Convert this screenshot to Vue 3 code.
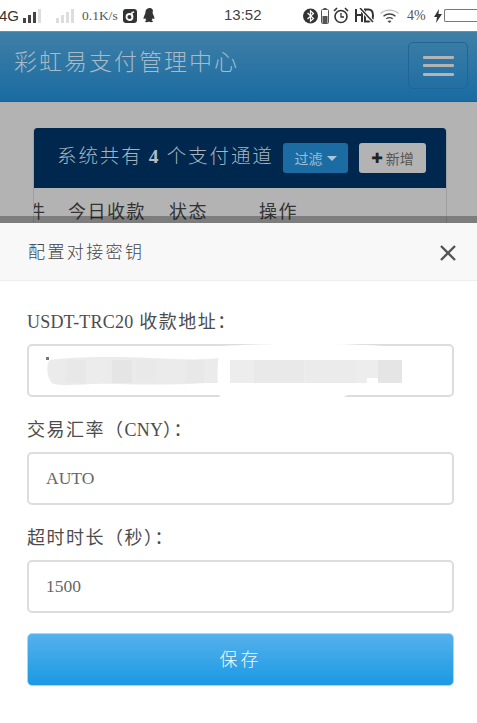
<script setup>
const tableCols = [
  { text: '件', cls: 'c0' },
  { text: '今日收款', cls: 'c1' },
  { text: '状态', cls: 'c2' },
  { text: '操作', cls: 'c3' },
]
const fields = [
  { pre: '', lat: 'USDT-TRC20', post: ' 收款地址：', value: '', redacted: true },
  { pre: '交易汇率（', lat: 'CNY', post: '）：', value: 'AUTO' },
  { pre: '超时时长（秒）：', lat: '', post: '', value: '1500' },
]
const blocks = [
  [66, '#e8e8e8'], [86, '#ececec'], [112, '#e5e5e5'], [136, '#e9e9e9'], [160, '#ebebeb'],
  [186, '#e8e8e8'], [204, '#ebebeb'],
]
</script>

<template>
  <div class="screen">
    <div class="status">
      <div class="st-left">
        <span class="net">4G</span>
        <svg class="sig" width="20" height="14" viewBox="0 0 20 14"><rect x="0" y="9" width="3" height="5" fill="#444"/><rect x="5" y="6" width="3" height="8" fill="#444"/><rect x="10" y="3" width="3" height="11" fill="#444"/><rect x="15" y="0" width="3" height="14" fill="#ddd"/></svg>
        <svg class="sig2" width="20" height="14" viewBox="0 0 20 14"><rect x="0" y="9" width="3" height="5" fill="#ddd"/><rect x="5" y="6" width="3" height="8" fill="#ddd"/><rect x="10" y="3" width="3" height="11" fill="#ddd"/><rect x="15" y="0" width="3" height="14" fill="#ddd"/></svg>
        <span class="speed">0.1K/s</span>
        <svg class="ic-music" width="14" height="14" viewBox="0 0 14 14"><rect width="14" height="14" rx="3" fill="#333"/><circle cx="6.500" cy="8" r="3" fill="none" stroke="#fff" stroke-width="1.800"/><path d="M9 8V3.500l2.200-.6" fill="none" stroke="#fff" stroke-width="1.400"/></svg>
        <svg class="ic-qq" width="13" height="15" viewBox="0 0 13 15"><path d="M6.500 0C3.600 0 2.400 2.200 2.400 4.600c0 1-.4 1.600-1 2.900C.6 9.200.3 10.600.8 11c.4.200.9-.4 1.300-1 .2 1 .8 1.800 1.400 2.300-1 .4-1.600.9-1.300 1.500.3.700 2.300.5 3.800 0h0c1.500.5 3.500.7 3.800 0 .3-.6-.3-1.100-1.300-1.500.6-.5 1.200-1.300 1.400-2.300.4.600.9 1.200 1.300 1 .5-.4.200-1.800-.6-3.500-.6-1.300-1-1.900-1-2.900C10.600 2.200 9.400 0 6.500 0z" fill="#333"/></svg>
      </div>
      <span class="clock">13:52</span>
      <div class="st-right">
        <svg class="ic-bt" width="15" height="16" viewBox="0 0 15 16"><circle cx="7.500" cy="8" r="7.500" fill="#333"/><path d="M4.500 5l6 5.500-3 2.700V2.800l3 2.700-6 5.500" fill="none" stroke="#fff" stroke-width="1.200"/></svg>
        <svg class="ic-batt" width="8" height="16" viewBox="0 0 8 16"><rect x="2.500" y="0" width="3" height="2" fill="#555"/><rect x=".5" y="1.500" width="7" height="14" rx="1" fill="#fff" stroke="#555"/><rect x="1.500" y="8" width="5" height="7" fill="#555"/></svg>
        <svg class="ic-alarm" width="16" height="17" viewBox="0 0 16 17"><circle cx="8" cy="9.500" r="6" fill="none" stroke="#333" stroke-width="1.600"/><path d="M8 6v4h3" fill="none" stroke="#333" stroke-width="1.300"/><path d="M1 4l3-3M15 4l-3-3" stroke="#333" stroke-width="1.600"/></svg>
        <svg class="ic-hd" width="19" height="15" viewBox="0 0 19 15"><path d="M1 1v13M7 1v13M1 7h6" stroke="#333" stroke-width="2" fill="none"/><path d="M10 1.500h3.500c3.500 0 4.500 3 4.500 6s-1 6-4.500 6H10z" stroke="#333" stroke-width="2" fill="none"/><path d="M5 0l13 14" stroke="#fff" stroke-width="3.500"/><path d="M5 0l13 14" stroke="#333" stroke-width="1.500"/></svg>
        <svg class="ic-wifi" width="19" height="14" viewBox="0 0 19 14"><path d="M.5 4.500c5-4.500 13-4.500 18 0" fill="none" stroke="#bbb" stroke-width="1.100"/><path d="M3.500 7.200c3.500-3 8.500-3 12 0" fill="none" stroke="#444" stroke-width="1.400"/><path d="M6.300 9.800c2-1.500 4.400-1.500 6.400 0" fill="none" stroke="#444" stroke-width="1.400"/><path d="M9.500 14l-2-2c1.200-.8 2.800-.8 4 0z" fill="#444"/></svg>
        <span class="pct">4%</span>
        <svg class="ic-bolt" width="8" height="14" viewBox="0 0 8 14"><path d="M5 0L0 8h3l-1 6 6-9H4.500z" fill="#333"/></svg>
        <span class="batt"></span>
      </div>
    </div>

    <header class="nav">
      <span class="brand">彩虹易支付管理中心</span>
      <div class="toggler"><i></i><i></i><i></i></div>
    </header>

    <main class="content">
      <section class="panel">
        <div class="panel-head">
          <span class="panel-title">系统共有 <b>4</b> 个支付通道</span>
          <span class="btn-filter">过滤<i class="caret"></i></span>
          <span class="btn-add"><b class="plus">✚</b>新增</span>
        </div>
        <div class="table-row">
          <span v-for="c in tableCols" :key="c.text" :class="c.cls">{{ c.text }}</span>
        </div>
      </section>
    </main>

    <div class="modal">
      <div class="modal-head">
        <span class="modal-title">配置对接密钥</span>
        <svg class="close" width="18" height="18" viewBox="0 0 18 18"><path d="M2 2l14 14M16 2L2 16" stroke="#555" stroke-width="2.400"/></svg>
      </div>
      <form class="modal-body">
        <div v-for="f in fields" :key="f.pre + f.lat" class="field">
          <label class="lbl">{{ f.pre }}<span class="lat">{{ f.lat }}</span>{{ f.post }}</label>
          <div class="input">
            <span>{{ f.value }}</span>
          </div>
        </div>
        <div class="save">保存</div>
      </form>
      <svg class="smear" width="477" height="70" viewBox="0 0 477 70">
        <rect x="46" y="21" width="3" height="3" fill="#777"/>
        <path d="M50 24c20-3 60-4 100-2 40 2 60 2 76-1v24c-30 4-70 4-110 3-30-1-50 3-62 0-8-3-8-22-4-24z" fill="#ebebeb"/>
        <rect v-for="b in blocks" :key="b[0]" :x="b[0]" y="24" width="20" height="23" :fill="b[1]" />
        <path d="M222 10c40-3 120-3 163 0 7 3 9 8 9 14 12-6 24-10 34-8-8 3-20 8-34 12v19h-29c-10 8-18 14-26 15-30 6-80 6-117 4-6-10-6-46 0-56z" fill="#fff"/>
        <rect x="230" y="24" width="172" height="18" fill="#ededed"/>
        <rect x="230" y="42" width="137" height="5" fill="#ededed"/>
        <rect x="378" y="42" width="24" height="5" fill="#e3e3e3"/>
        <rect x="254" y="24" width="50" height="23" fill="#e9e9e9"/>
        <rect x="306" y="24" width="50" height="23" fill="#ebebeb"/>
        <rect x="378" y="24" width="24" height="23" fill="#e5e5e5"/>
      </svg>
    </div>
  </div>
</template>

<style scoped>
.screen {
  position: relative;
  width: 477px;
  height: 723px;
  overflow: hidden;
  background: #b3b3b3;
  font-family: "Liberation Serif", "Noto Sans CJK SC", serif;
  display: flex;
  flex-direction: column;
}
.status {
  height: 31px;
  background: #fff;
  display: flex;
  align-items: center;
  justify-content: space-between;
  color: #444;
  flex: none;
  position: relative;
}
.st-left, .st-right { display: flex; align-items: center; }
.net { font: 15px "Liberation Sans", sans-serif; color: #333; width: 24px; margin-left: -1px; }
.sig { margin-right: 13px; }
.sig2 { margin-right: 6px; }
.speed { font-size: 13.500px; width: 41px; color: #555; }
.ic-qq { margin-left: 6px; }
.clock { font: 15px "Liberation Sans", sans-serif; color: #444; position: absolute; left: 224px; top: 6px; }
.st-right > * { margin-left: 3px; }
.ic-alarm { margin-left: 4px; }
.ic-hd { margin-left: 6px; }
.ic-wifi { margin-left: 6px; }
.pct { font-size: 14px; margin-left: 8px; width: 24px; color: #555; white-space: nowrap; }
.ic-bolt { margin-left: 3px; }
.batt { width: 33px; height: 13px; margin-left: 2px; border: 1px solid #777; border-right: none; border-radius: 2px 0 0 2px; box-sizing: border-box; }
.nav {
  height: 71px;
  flex: none;
  box-sizing: border-box;
  border-top: 1px solid #5c92b2;
  border-bottom: 1px solid #17608f;
  background: linear-gradient(#3f7fa6, #1a6ba2);
  display: flex;
  align-items: center;
  justify-content: space-between;
  padding: 0 9px 7px 14px;
}
.brand { font-size: 23px; letter-spacing: 2px; color: #a9bac8; font-family: "Noto Sans CJK SC", sans-serif; font-weight: 300; margin-bottom: 6px; }
.toggler {
  width: 60px;
  height: 47px;
  margin-top: 5px;
  box-sizing: border-box;
  border: 1px solid #1f6596;
  border-radius: 5px;
  display: flex;
  flex-direction: column;
  align-items: center;
  justify-content: center;
  gap: 5.500px;
}
.toggler i { display: block; width: 31px; height: 3px; border-radius: 1px; background: #b3b3b3; }
.content { padding: 26px 30px 0 33px; }
.panel {
  width: 414px;
  height: 200px;
  box-sizing: border-box;
  border: 1px solid #a0a0a0;
  border-top: none;
  border-radius: 4px 4px 0 0;
  overflow: hidden;
}
.panel-head {
  height: 60px;
  margin: 0 -1px;
  background: #00284f;
  display: flex;
  align-items: center;
  padding-left: 24px;
  color: #a7b3bf;
  border-radius: 4px 4px 0 0;
}
.panel-title { font-size: 19.500px; letter-spacing: 1.900px; white-space: nowrap; width: 226px; font-family: "Noto Sans CJK SC", sans-serif; font-weight: 300; margin-top: -8px; }
.panel-title b { font-family: "Liberation Serif", serif; font-weight: 700; color: #b3bcc5; }
.btn-filter {
  width: 65px;
  height: 30px;
  background: #1b6ca3;
  border-radius: 3px;
  color: #9dbdd3;
  font-size: 14px;
  display: flex;
  align-items: center;
  justify-content: center;
  gap: 4px;
  font-family: "Noto Sans CJK SC", sans-serif;
}
.caret { width: 0; height: 0; border-left: 5px solid transparent; border-right: 5px solid transparent; border-top: 5px solid #aac6d8; }
.btn-add {
  width: 67px;
  height: 30px;
  margin-left: 11px;
  background: #b3b3b3;
  border-radius: 3px;
  color: #555;
  font-size: 14px;
  display: flex;
  align-items: center;
  justify-content: center;
  gap: 3px;
  font-family: "Noto Sans CJK SC", sans-serif;
}
.plus { color: #222; font-size: 14px; font-family: "DejaVu Sans", sans-serif; }
.table-row {
  display: flex;
  margin: 10px 0 0 -7px;
  font-size: 18px;
  color: #333;
  font-family: "Noto Sans CJK SC", sans-serif;
  line-height: 24px;
  white-space: nowrap;
  letter-spacing: 1.500px;
}
.c0 { width: 41px; flex: none; }
.c1 { width: 101px; flex: none; }
.c2 { width: 90px; flex: none; }
.modal {
  position: absolute;
  left: 0;
  right: 0;
  top: 223px;
  bottom: 0;
  background: #fff;
  box-shadow: 0 -7px 0 rgba(0, 0, 0, .3);
}
.modal-head {
  height: 58px;
  box-sizing: border-box;
  background: #f8f8f8;
  border-bottom: 1px solid #eee;
  display: flex;
  align-items: center;
  justify-content: space-between;
  padding: 0 20px 0 28px;
}
.modal-title { font-size: 17px; letter-spacing: 2.400px; color: #444; font-family: "Noto Sans CJK SC", sans-serif; font-weight: 300; margin-top: -2px; }
.close { margin-top: 2px; }
.modal-body { padding: 24px 23px 0 27px; }
.field { margin-bottom: 16px; }
.lbl { display: block; height: 39px; line-height: 35px; font-size: 18px; color: #4c4c4c; white-space: nowrap; font-weight: 400; letter-spacing: 1.500px; }
.lat { letter-spacing: .2px; }
.input {
  height: 53px;
  box-sizing: border-box;
  border: 2px solid #ddd;
  border-radius: 5px;
  display: flex;
  align-items: center;
  padding: 0 17px;
  font-size: 17.500px;
  color: #666;
  background: #fff;
}
.save {
  height: 53px;
  margin-top: 20px;
  padding-bottom: 3px;
  border-radius: 5px;
  background: linear-gradient(#56b1ec, #1b99e3);
  border: 1px solid #a9d8f3;
  box-sizing: border-box;
  color: #f4faff;
  display: flex;
  align-items: center;
  justify-content: center;
  letter-spacing: 3px;
  font-size: 18px;
  font-family: "Noto Sans CJK SC", sans-serif;
  font-weight: 300;
}
.smear { position: absolute; left: 0; top: 113px; pointer-events: none; }
</style>
